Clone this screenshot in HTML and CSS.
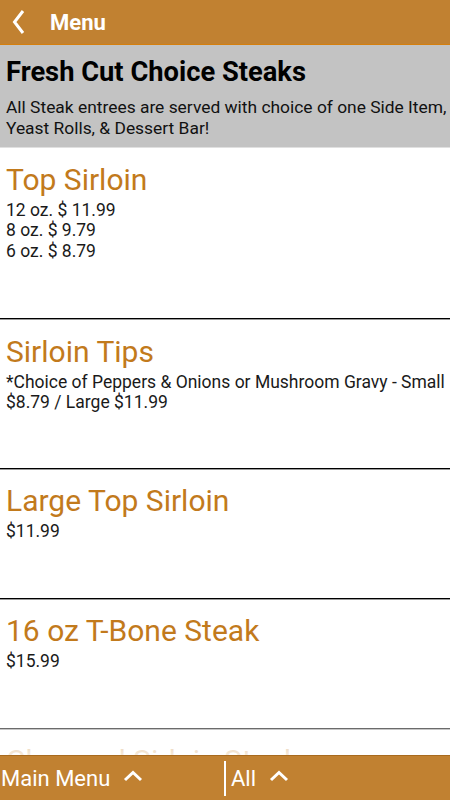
FILE: index.html
```html
<!DOCTYPE html>
<html>
<head>
<meta charset="utf-8">
<link rel="stylesheet" href="styles.css">
</head>
<body>
<div class="app">
  <header class="topbar">
    <svg class="back" width="14" height="26" viewBox="0 0 14 26"><polyline points="11,2 2.5,13 11,24" fill="none" stroke="#fff" stroke-width="3"/></svg>
    <span class="topbar-title">Menu</span>
  </header>
  <section class="category">
    <h1 class="category-title">Fresh Cut Choice Steaks</h1>
    <p class="category-desc">All Steak entrees are served with choice of one Side Item, Yeast Rolls, &amp; Dessert Bar!</p>
  </section>
  <div class="list">
    <div class="item">
      <h2 class="item-title">Top Sirloin</h2>
      <p class="item-desc">12 oz. $ 11.99<br>8 oz. $ 9.79<br>6 oz. $ 8.79</p>
    </div>
    <div class="item">
      <h2 class="item-title">Sirloin Tips</h2>
      <p class="item-desc">*Choice of Peppers &amp; Onions or Mushroom Gravy - Small $8.79 / Large $11.99</p>
    </div>
    <div class="item">
      <h2 class="item-title">Large Top Sirloin</h2>
      <p class="item-desc">$11.99</p>
    </div>
    <div class="item">
      <h2 class="item-title">16 oz T-Bone Steak</h2>
      <p class="item-desc">$15.99</p>
    </div>
    <div class="item">
      <h2 class="item-title">Chopped Sirloin Steak</h2>
      <p class="item-desc">$9.79</p>
    </div>
    <div class="fade"></div>
  </div>
  <footer class="bottombar">
    <div class="tab tab-main">
      <span>Main Menu</span>
      <svg class="chev" width="20" height="12" viewBox="0 0 20 12"><polyline points="2,10 10,2.5 18,10" fill="none" stroke="#fff" stroke-width="3"/></svg>
    </div>
    <div class="sep"></div>
    <div class="tab tab-all">
      <span>All</span>
      <svg class="chev" width="20" height="12" viewBox="0 0 20 12"><polyline points="2,10 10,2.5 18,10" fill="none" stroke="#fff" stroke-width="3"/></svg>
    </div>
  </footer>
</div>
</body>
</html>
```
FILE: styles.css
```css
html, body {
  margin: 0;
  padding: 0;
}
body {
  font-family: Roboto, "Liberation Sans", sans-serif;
  background: #fff;
}
.app {
  width: 450px;
  height: 800px;
  display: flex;
  flex-direction: column;
  overflow: hidden;
}
.topbar {
  height: 44px;
  flex: none;
  background: #c18131;
  border-bottom: 1px solid #d67f0c;
  display: flex;
  align-items: center;
  color: #fff;
}
.back {
  margin-left: 12px;
  margin-right: 24px;
}
.topbar-title {
  font-weight: bold;
  font-size: 22px;
}
.category {
  flex: none;
  background: #c3c3c3;
  padding: 11px 0 0 6px;
  height: 91px;
  border-bottom: 1px solid #e0e0e0;
}
.category-title {
  margin: 0;
  font-size: 27.3px;
  font-weight: bold;
  color: #000;
  line-height: 32px;
}
.category-desc {
  margin: 9px 0 0;
  font-size: 17.4px;
  line-height: 21px;
  color: #111;
}
.list {
  flex: 1;
  overflow: hidden;
  position: relative;
}
.item {
  padding: 15px 0 0 6px;
  height: 155px;
  border-bottom: 1px solid #000;
  box-shadow: 0 1px 0 #9a9a9a;
  margin-bottom: 1px;
}
.item:nth-child(2) { height: 133px; }
.item:nth-child(3), .item:nth-child(4), .item:nth-child(5) {
  padding-top: 14px;
  height: 114px;
}
.item-title {
  margin: 0;
  font-weight: normal;
  font-size: 30px;
  line-height: 33px;
  color: #c27a1c;
}
.item-desc {
  margin: 4px 0 0;
  font-size: 17.5px;
  line-height: 20.3px;
  color: #1a1a1a;
}
.fade {
  position: absolute;
  left: 0;
  right: 0;
  bottom: 0;
  height: 40px;
  background: linear-gradient(rgba(255,255,255,0.2), rgba(255,255,255,0.85));
}
.bottombar {
  flex: none;
  height: 44px;
  background: #c18131;
  border-top: 1px solid #a86a1e;
  display: flex;
  align-items: center;
  color: #fff;
  font-size: 22px;
}
.tab {
  display: flex;
  align-items: center;
  gap: 13px;
}
.tab-main {
  width: 224px;
  padding-left: 1px;
  box-sizing: border-box;
}
.tab-all {
  padding-left: 5px;
}
.sep {
  width: 2px;
  height: 35px;
  background: #fff;
  flex: none;
}
.chev {
  margin-top: -4px;
}
```
